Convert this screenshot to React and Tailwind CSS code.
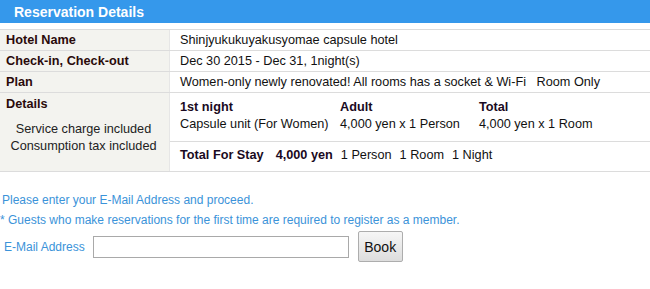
import React from 'react';

const rows = [
  { label: 'Hotel Name', value: 'Shinjyukukuyakusyomae capsule hotel' },
  { label: 'Check-in, Check-out', value: 'Dec 30 2015 - Dec 31, 1night(s)' },
  { label: 'Plan', value: 'Women-only newly renovated! All rooms has a socket & Wi-Fi\u00a0\u00a0 Room Only' },
];

const App = () => {
  return (
    <div className="w-[650px] h-[289px] bg-white overflow-hidden text-[12.7px] leading-none text-[#111]" style={{ fontFamily: '"Liberation Sans", Arial, sans-serif' }}>
      {/* Header */}
      <div className="h-[23px] bg-[#3598eb] flex items-center pl-[14px]">
        <span className="text-white font-bold text-[14px]">Reservation Details</span>
      </div>

      {/* Details table */}
      <div className="mt-[6px] border-t border-[#dcdcdc]">
        {rows.map((row) => (
          <div key={row.label} className="flex border-b border-[#dcdcdc]">
            <div className="w-[170px] h-[20px] bg-[#f3f3ef] border-r border-[#e6e6e6] flex items-center pl-[6px] font-bold text-[#2a0a0a]">
              {row.label}
            </div>
            <div className="flex-1 flex items-center pl-[10px]">{row.value}</div>
          </div>
        ))}

        <div className="flex border-b border-[#dcdcdc]">
          <div className="w-[170px] bg-[#f3f3ef] border-r border-[#e6e6e6] pl-[6px] pt-[5px]">
            <div className="font-bold text-[#2a0a0a]">Details</div>
            <div className="mt-[10px] pr-[8px] text-center leading-[17px] text-[#222]">
              <div>Service charge included</div>
              <div>Consumption tax included</div>
            </div>
          </div>
          <div className="flex-1">
            <div className="flex pl-[10px] pt-[6px] pb-[8px] border-b border-[#dcdcdc] leading-[17px]">
              <div className="w-[160px]">
                <div className="font-bold text-[#1a0a22]">1st night</div>
                <div>Capsule unit (For Women)</div>
              </div>
              <div className="w-[139px]">
                <div className="font-bold text-[#1a0a22]">Adult</div>
                <div>4,000 yen x 1 Person</div>
              </div>
              <div>
                <div className="font-bold text-[#1a0a22]">Total</div>
                <div>4,000 yen x 1 Room</div>
              </div>
            </div>
            <div className="flex items-center pl-[10px] h-[29px] pb-[2px] gap-[8px]">
              <span className="font-bold text-[#1a0a22]">Total For Stay</span>
              <span className="font-bold text-[#1a0a22] ml-[4px]">4,000 yen</span>
              <span>1 Person</span>
              <span>1 Room</span>
              <span>1 Night</span>
            </div>
          </div>
        </div>
      </div>

      {/* Email form */}
      <div className="mt-[22px] text-[12px] text-[#3b93d9] pl-[2px]">
        <p>Please enter your E-Mail Address and proceed.</p>
        <p className="mt-[8px] -ml-[2px]">* Guests who make reservations for the first time are required to register as a member.</p>
        <div className="flex items-center mt-[5px] pl-[2px]">
          <label className="text-[12px]">E-Mail Address</label>
          <input type="text" className="ml-[8px] w-[256px] h-[22px] border border-[#a9a9a9] bg-white outline-none" />
          <button className="ml-[9px] w-[45px] h-[31px] border border-[#adadad] rounded-[2px] bg-gradient-to-b from-[#f6f6f6] to-[#dddddd] text-[#111] text-[14px]">Book</button>
        </div>
      </div>
    </div>
  );
};

export default App;
